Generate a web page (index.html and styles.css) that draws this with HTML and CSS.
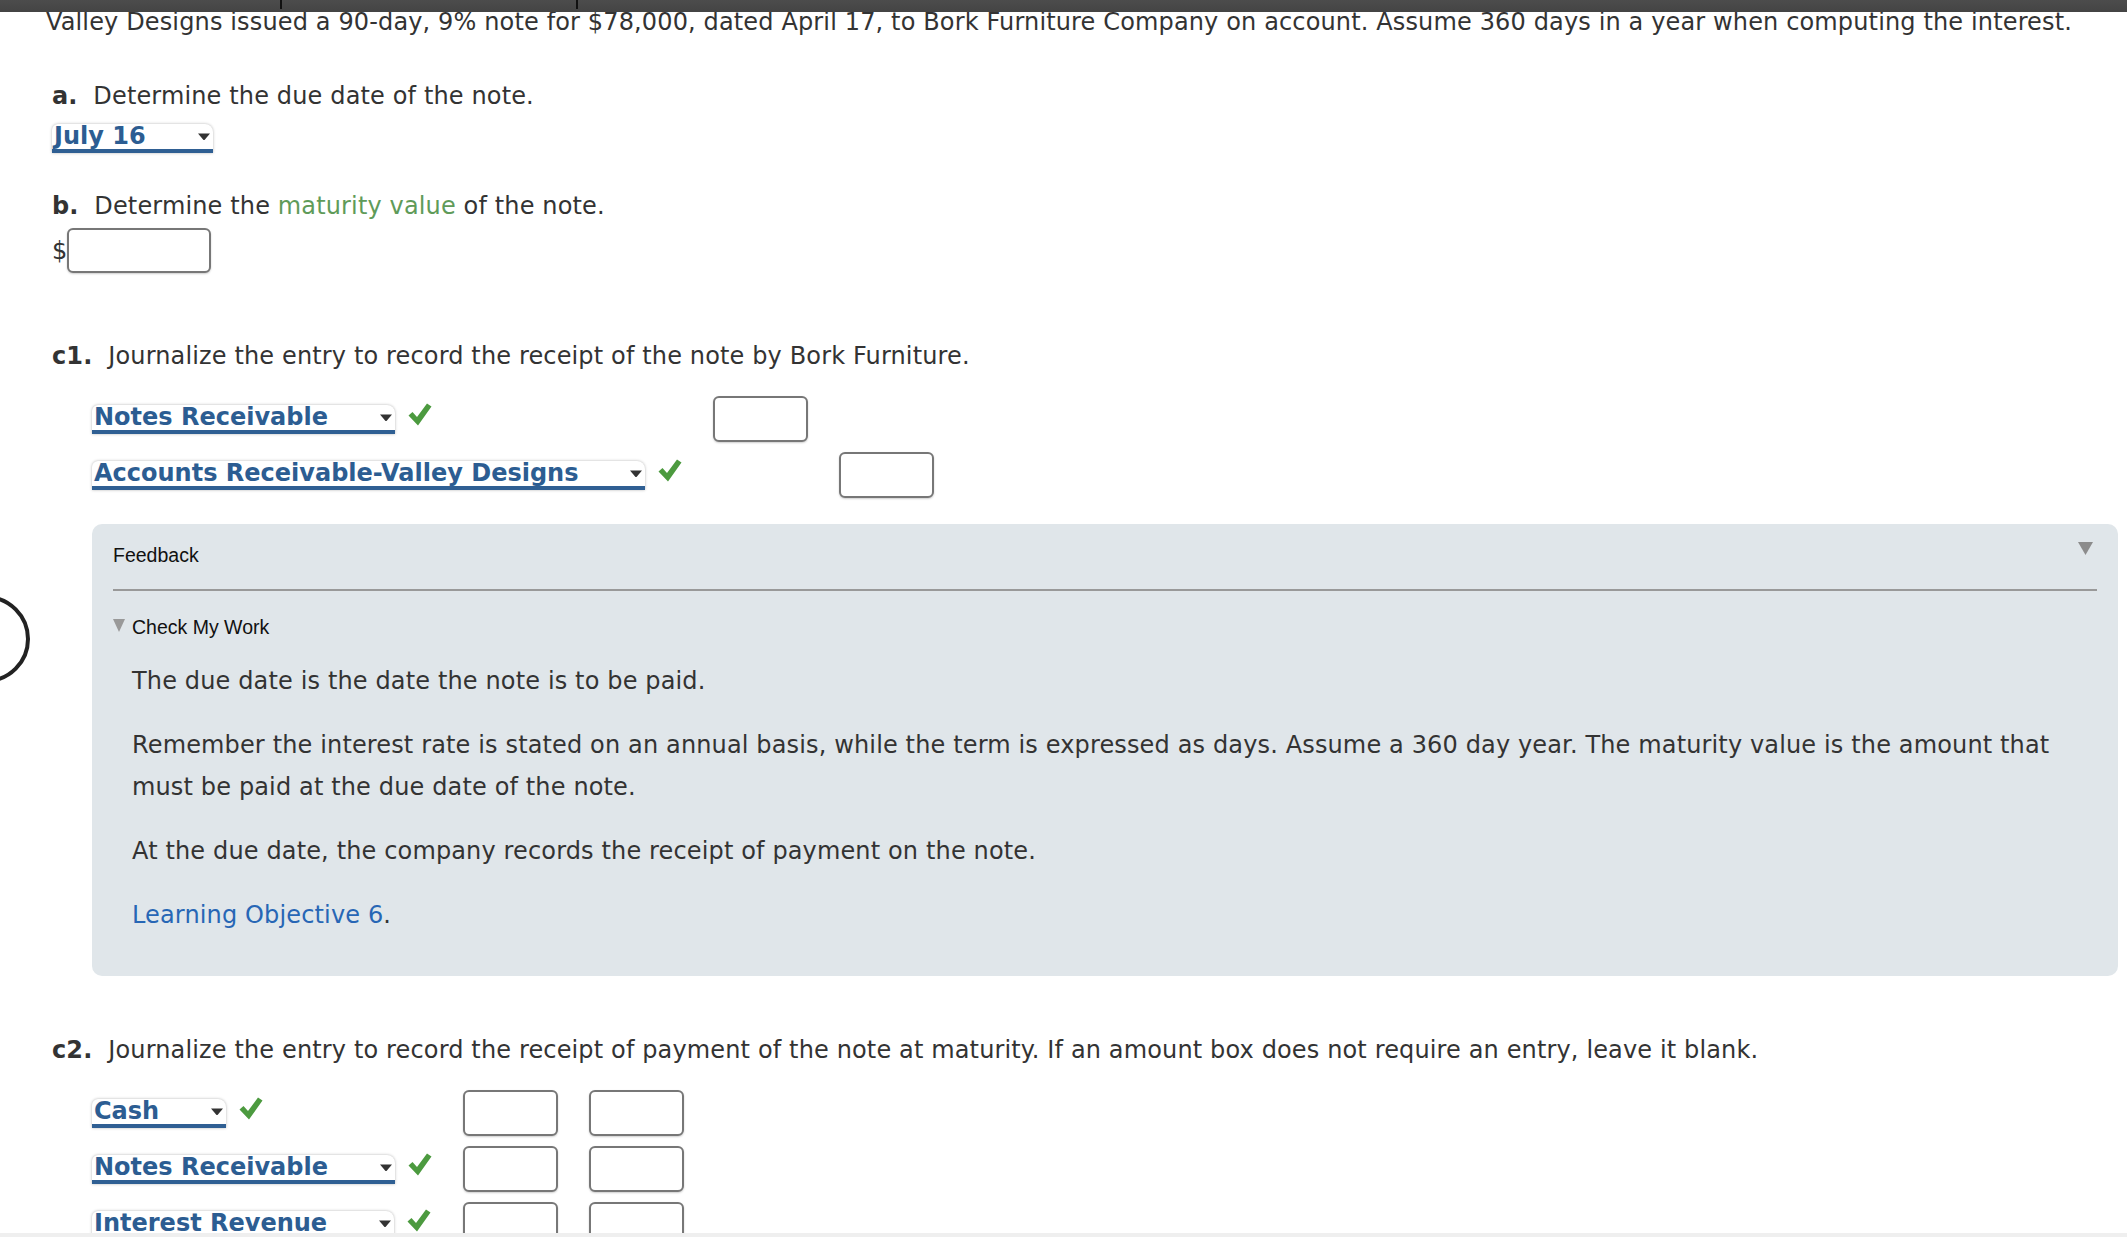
FILE: index.html
```html
<!DOCTYPE html>
<html lang="en">
<head>
  <meta charset="UTF-8">
  <meta name="viewport" content="width=device-width, initial-scale=1.0">
  <title>Notes Receivable</title>
  <link rel="stylesheet" href="styles.css">
</head>
<body>
  <div class="topbar">
    <span class="tick tick-1"></span>
    <span class="tick tick-2"></span>
  </div>
  <div class="ring"></div>

  <main class="page">
    <p class="intro">Valley Designs issued a 90-day, 9% note for $78,000, dated April 17, to Bork Furniture Company on account. Assume 360 days in a year when computing the interest.</p>

    <section class="part part-a">
      <p class="prompt"><b class="label">a.</b> Determine the due date of the note.</p>
      <div class="answer">
        <span class="dropdown">
          <span class="dd-text">July 16</span>
          <svg class="dd-arrow" viewBox="0 0 12 7" width="12" height="7"><path d="M0 0.5 H12 L6.5 7 H5.5 Z" fill="#333"/></svg>
        </span>
      </div>
    </section>

    <section class="part part-b">
      <p class="prompt"><b class="label">b.</b> Determine the <span class="term">maturity value</span> of the note.</p>
      <div class="answer money">
        <span class="currency">$</span>
        <input class="amount amount-wide" type="text">
      </div>
    </section>

    <section class="part part-c1">
      <p class="prompt"><b class="label">c1.</b> Journalize the entry to record the receipt of the note by Bork Furniture.</p>
      <div class="journal">
        <div class="account">
          <span class="dropdown">
            <span class="dd-text">Notes Receivable</span>
            <svg class="dd-arrow" viewBox="0 0 12 7" width="12" height="7"><path d="M0 0.5 H12 L6.5 7 H5.5 Z" fill="#333"/></svg>
          </span>
          <svg class="check" viewBox="0 0 24 23" width="24" height="23"><path d="M0.5 12.5 L4.5 9 L9 14 L19 0.5 L23.5 3.5 L10 22.5 Z" fill="#4c9a3f"/></svg>
        </div>
        <input class="amount" type="text">
        <span class="empty"></span>

        <div class="account">
          <span class="dropdown">
            <span class="dd-text">Accounts Receivable-Valley Designs</span>
            <svg class="dd-arrow" viewBox="0 0 12 7" width="12" height="7"><path d="M0 0.5 H12 L6.5 7 H5.5 Z" fill="#333"/></svg>
          </span>
          <svg class="check" viewBox="0 0 24 23" width="24" height="23"><path d="M0.5 12.5 L4.5 9 L9 14 L19 0.5 L23.5 3.5 L10 22.5 Z" fill="#4c9a3f"/></svg>
        </div>
        <span class="empty"></span>
        <input class="amount" type="text">
      </div>

      <div class="feedback">
        <div class="feedback-head">
          <span>Feedback</span>
          <svg class="collapse" viewBox="0 0 15 13" width="15" height="13"><path d="M0 0 H15 L7.5 13 Z" fill="#8c8c8c"/></svg>
        </div>
        <div class="feedback-rule"></div>
        <div class="check-work">
          <svg class="cw-arrow" viewBox="0 0 12 13" width="12" height="13"><path d="M0 0 H12 L6 13 Z" fill="#999"/></svg>
          <span>Check My Work</span>
        </div>
        <div class="feedback-body">
          <p>The due date is the date the note is to be paid.</p>
          <p>Remember the interest rate is stated on an annual basis, while the term is expressed as days. Assume a 360 day year. The maturity value is the amount that must be paid at the due date of the note.</p>
          <p>At the due date, the company records the receipt of payment on the note.</p>
          <p><a class="objective" href="#">Learning Objective 6</a>.</p>
        </div>
      </div>
    </section>

    <section class="part part-c2">
      <p class="prompt"><b class="label">c2.</b> Journalize the entry to record the receipt of payment of the note at maturity. If an amount box does not require an entry, leave it blank.</p>
      <div class="journal">
        <div class="account">
          <span class="dropdown">
            <span class="dd-text">Cash</span>
            <svg class="dd-arrow" viewBox="0 0 12 7" width="12" height="7"><path d="M0 0.5 H12 L6.5 7 H5.5 Z" fill="#333"/></svg>
          </span>
          <svg class="check" viewBox="0 0 24 23" width="24" height="23"><path d="M0.5 12.5 L4.5 9 L9 14 L19 0.5 L23.5 3.5 L10 22.5 Z" fill="#4c9a3f"/></svg>
        </div>
        <input class="amount" type="text">
        <input class="amount" type="text">

        <div class="account">
          <span class="dropdown">
            <span class="dd-text">Notes Receivable</span>
            <svg class="dd-arrow" viewBox="0 0 12 7" width="12" height="7"><path d="M0 0.5 H12 L6.5 7 H5.5 Z" fill="#333"/></svg>
          </span>
          <svg class="check" viewBox="0 0 24 23" width="24" height="23"><path d="M0.5 12.5 L4.5 9 L9 14 L19 0.5 L23.5 3.5 L10 22.5 Z" fill="#4c9a3f"/></svg>
        </div>
        <input class="amount" type="text">
        <input class="amount" type="text">

        <div class="account">
          <span class="dropdown">
            <span class="dd-text">Interest Revenue</span>
            <svg class="dd-arrow" viewBox="0 0 12 7" width="12" height="7"><path d="M0 0.5 H12 L6.5 7 H5.5 Z" fill="#333"/></svg>
          </span>
          <svg class="check" viewBox="0 0 24 23" width="24" height="23"><path d="M0.5 12.5 L4.5 9 L9 14 L19 0.5 L23.5 3.5 L10 22.5 Z" fill="#4c9a3f"/></svg>
        </div>
        <input class="amount" type="text">
        <input class="amount" type="text">
      </div>
    </section>
  </main>

  <div class="bottom-edge"></div>
</body>
</html>
```

FILE: styles.css
```css
body {
  margin: 0;
  padding: 0;
  font-family: "DejaVu Sans", Verdana, sans-serif;
  font-size: 24px;
  letter-spacing: 0.14px;
  color: #333;
  background: #fff;
  overflow: hidden;
}

/* barra superior fija */
.topbar {
  position: fixed;
  top: 0;
  left: 0;
  right: 0;
  height: 12px;
  background: linear-gradient(#4c4c4c, #444);
  z-index: 5;
}
.tick {
  position: absolute;
  top: 0;
  width: 2px;
  height: 9px;
  background: #111;
}
.tick-1 { left: 280px; }
.tick-2 { left: 576px; }

/* circulo cortado a la izquierda */
.ring {
  position: absolute;
  top: 595px;
  left: -58px;
  width: 80px;
  height: 80px;
  border: 4px solid #222;
  border-radius: 50%;
}

.bottom-edge {
  position: fixed;
  left: 0;
  right: 0;
  bottom: 0;
  height: 4px;
  background: #efefef;
}

.page {
  padding: 0 9px 0 46px;
}

.intro {
  margin: 8px 0 0;
  line-height: 28px;
}

.part {
  margin-left: 6px;
}

.prompt {
  margin: 0;
  line-height: 28px;
}
.label {
  margin-right: 8px;
}
.term {
  color: #5f9b59;
}

.part-a .prompt { margin-top: 46px; }
.part-a .answer { margin-top: 14px; }
.part-b .prompt { margin-top: 39px; }
.part-b .answer { margin-top: 8px; }
.part-c1 .prompt { margin-top: 69px; }
.part-c2 .prompt { margin-top: 60px; }

.answer {
  display: flex;
  align-items: center;
}

/* desplegable con linea azul */
.dropdown {
  display: inline-flex;
  align-items: center;
  height: 25px;
  padding: 0 3px 0 2px;
  background: #fff;
  border-bottom: 4px solid #2f5f93;
  border-radius: 6px 8px 0 0;
  box-shadow: 0 0 3px rgba(0, 0, 0, 0.3);
  font-weight: bold;
  letter-spacing: 0;
  color: #2c5d92;
  line-height: 25px;
}
.dd-arrow {
  margin-left: 52px;
  flex-shrink: 0;
}

.currency {
  line-height: 28px;
}

.amount {
  box-sizing: border-box;
  width: 95px;
  height: 46px;
  margin: 0;
  padding: 0 6px;
  border: 2px solid #777;
  border-radius: 6px;
  background: #fff;
  box-shadow: 0 1px 2px rgba(0, 0, 0, 0.2);
  font: inherit;
}
.amount-wide {
  width: 144px;
  height: 45px;
}

.journal {
  display: grid;
  grid-template-columns: auto 95px 95px;
  column-gap: 31px;
  row-gap: 10px;
  align-items: center;
  justify-content: start;
  margin: 26px 0 0 40px;
}
.account {
  display: flex;
  align-items: flex-start;
}
.check {
  margin: -2px 0 0 13px;
  flex-shrink: 0;
}

/* panel de retroalimentacion */
.feedback {
  margin: 26px 0 0 40px;
  padding: 19px 21px 40px 21px;
  background: #e0e6ea;
  border-radius: 10px;
}
.feedback-head {
  display: flex;
  justify-content: space-between;
  align-items: flex-start;
  font-family: "Liberation Sans", Arial, sans-serif;
  font-size: 19.5px;
  letter-spacing: 0;
  line-height: 24px;
  color: #111;
}
.collapse {
  margin: -1px 4px 0 0;
}
.feedback-rule {
  height: 2px;
  margin-top: 22px;
  background: #999;
}
.check-work {
  display: flex;
  align-items: center;
  margin-top: 24px;
  font-family: "Liberation Sans", Arial, sans-serif;
  font-size: 19.5px;
  letter-spacing: 0;
  line-height: 24px;
  color: #111;
}
.cw-arrow {
  margin: -4px 7px 0 0;
}
.feedback-body {
  padding-left: 19px;
  margin-top: 21px;
}
.feedback-body p {
  margin: 22px 0 0;
  line-height: 42px;
}
.feedback-body p:first-child {
  margin-top: 0;
}
.objective {
  color: #2766b5;
  text-decoration: none;
}
```
